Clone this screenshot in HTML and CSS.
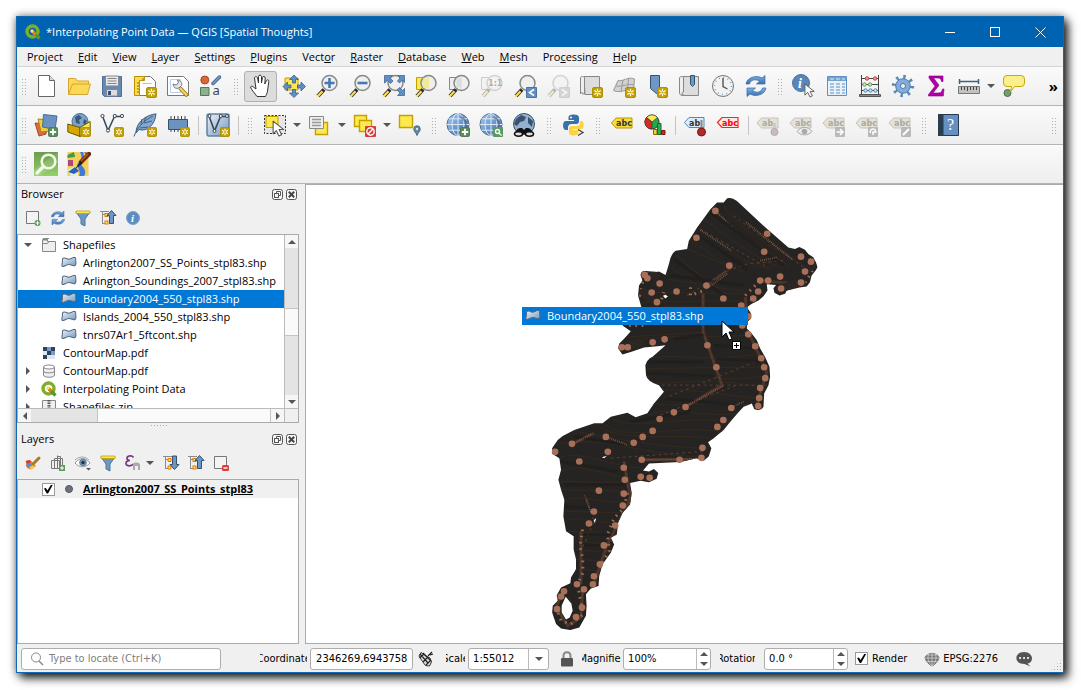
FILE: index.html
```html
<!DOCTYPE html>
<html lang="en">
<head>
<meta charset="utf-8">
<meta name="viewport" content="width=device-width, initial-scale=1">
<title>*Interpolating Point Data — QGIS [Spatial Thoughts]</title>
<link rel="stylesheet" href="styles.css">
</head>
<body>
<svg class="sprite" aria-hidden="true">
  <defs>
    <linearGradient id="g-blue" x1="0" y1="0" x2="1" y2="1"><stop offset="0" stop-color="#eef3f8"/><stop offset="1" stop-color="#6f97bf"/></linearGradient>
    <linearGradient id="g-globe" x1="0" y1="0" x2="1" y2="1"><stop offset="0" stop-color="#a9cdf3"/><stop offset="1" stop-color="#3669a8"/></linearGradient>
    <linearGradient id="g-green" x1="0" y1="0" x2="0" y2="1"><stop offset="0" stop-color="#6c9c4c"/><stop offset="1" stop-color="#93d169"/></linearGradient>
    <linearGradient id="g-sync" x1="0" y1="0" x2="0" y2="1"><stop offset="0" stop-color="#7fb0e6"/><stop offset="1" stop-color="#3a6fae"/></linearGradient>
  </defs>
  <symbol id="star" viewBox="0 0 11 11"><rect x=".5" y=".5" width="10" height="10" rx="1.5" fill="#c4a000" stroke="#b08f00"/><path d="M5.500 1.800v7.400M2.300 3.600l6.400 3.800M8.700 3.600l-6.400 3.800" stroke="#fff" stroke-width="1.200"/><circle cx="5.500" cy="5.500" r="1.100" fill="#c4a000"/></symbol>
  <symbol id="add" viewBox="0 0 11 11"><rect x=".5" y=".5" width="10" height="10" rx="1.500" fill="#5a8c5a" stroke="#4a774c"/><path d="M5.500 2v7M2 5.500h7" stroke="#fff" stroke-width="2"/></symbol>
  <symbol id="lens" viewBox="0 0 24 24"><path d="M9 15.500 3 22" stroke="#2b2b2b" stroke-width="4"/><path d="M7.500 17.200 2.500 22.500" stroke="#fcd94f" stroke-width="2.400"/><circle cx="14.500" cy="9" r="7.500" fill="#eee" fill-opacity=".88" stroke="#888a85" stroke-width="1.500"/></symbol>
  <symbol id="pointer" viewBox="0 0 14 16"><path d="M1 1v12l3-3 2.500 5 2.500-1.200L6.600 9H11z" fill="#fff" stroke="#555" stroke-width="1" stroke-linejoin="round"/></symbol>
  <symbol id="globe" viewBox="0 0 24 24"><circle cx="12" cy="11.500" r="11" fill="url(#g-globe)" stroke="#54708f"/><path d="M12 .5v22M1 11.500h22M2.800 5.800h18.400M2.800 17.200h18.400" stroke="#dce9f7" fill="none"/><ellipse cx="12" cy="11.500" rx="6" ry="11" fill="none" stroke="#dce9f7"/><path d="M15 4a9 9 0 0 1 4 12" fill="none" stroke="#4a5d74" stroke-width="2" opacity=".6"/></symbol>
  <symbol id="graytag" viewBox="0 0 24 24"><path d="M1 7 5.500 2h16.500v10H5.500z" fill="#e5e2d8" stroke="#c5c3bb"/></symbol>
  <symbol id="refresh" viewBox="0 0 24 24"><path d="M2 10C3 3.500 12 .5 18 4l3-2.500V10h-8.500l3-2.800C11 4.500 6.500 6 5.500 10z" fill="url(#g-sync)" stroke="#3568a5" stroke-width=".7"/><path d="M22 14c-1 6.500-10 9.500-16 6l-3 2.500V14h8.500l-3 2.800c4.500 2.700 9 1.200 10-2.800z" fill="url(#g-sync)" stroke="#3568a5" stroke-width=".7"/></symbol>
  <symbol id="polygon" viewBox="0 0 17 14"><path d="M1.500 3C2.500 1 5 1.800 7 2.800s4-1.300 7-1.800c2.500 0 1.200 3 1.800 5 .6 3-1 4.500-3 3.800S9 8 6.500 9 1 12 1 9.500 2 6 1.500 3z" fill="url(#g-blue)" stroke="#56687d" stroke-width="1.100"/></symbol>
  <symbol id="qgis" viewBox="0 0 16 16"><circle cx="7.500" cy="7.500" r="5.500" fill="none" stroke="#7fae2c" stroke-width="3.400"/><path d="m8 8 6.500 6.500" stroke="#589632" stroke-width="3.200"/><path d="m7 7 3.500 3.500" stroke="#ee7913" stroke-width="3"/><circle cx="7" cy="7" r="1.700" fill="#f4e05a"/></symbol>
  <symbol id="tree-up" viewBox="0 0 18 18"><path d="M3.500 2v13M3.500 5.500h5M3.500 14.500h5M1 2.500h9" stroke="#8b8b8b" fill="none"/><rect x="6" y="4.500" width="3" height="3" fill="#fce94f" stroke="#e3770c"/><rect x="6" y="12" width="3" height="3" fill="#fce94f" stroke="#e3770c"/><path d="M12.500 1.500 17 6.500h-2.500v8h-4v-8H8z" fill="#6d97c4" stroke="#34516e"/></symbol>
  <symbol id="funnel" viewBox="0 0 18 18"><path d="M2 3h14l-5 7v7l-4-2v-5z" fill="#6d97c4" stroke="#4f759c"/><path d="M2 2h14v2.500H2z" fill="#fce94f" stroke="#c4a000" stroke-width=".8"/></symbol>
  <symbol id="float" viewBox="0 0 11 11"><rect x=".5" y=".5" width="10" height="10" rx="2" fill="#f6f6f6" stroke="#555"/><path d="M4.500 4.500v-2h4v4h-2" fill="none" stroke="#555"/><rect x="2.500" y="4.500" width="4" height="4" fill="none" stroke="#555"/></symbol>
  <symbol id="close" viewBox="0 0 11 11"><rect x=".5" y=".5" width="10" height="10" rx="2" fill="#f6f6f6" stroke="#555"/><path d="m2.800 2.800 5.400 5.400m0-5.400L2.800 8.200" stroke="#444" stroke-width="2"/></symbol>
</svg>

<main class="window">
  <header class="titlebar">
    <svg class="logo" viewBox="0 0 16 16"><use href="#qgis"/></svg>
    <h1 class="title">*Interpolating Point Data — QGIS [Spatial Thoughts]</h1>
    <button class="winbtn" aria-label="Minimize"><svg viewBox="0 0 11 11"><path d="M0 5.500h10" stroke="#fff"/></svg></button>
    <button class="winbtn" aria-label="Maximize"><svg viewBox="0 0 11 11"><rect x=".5" y=".5" width="9" height="9" fill="none" stroke="#fff"/></svg></button>
    <button class="winbtn" aria-label="Close"><svg viewBox="0 0 11 11"><path d="m.5.5 10 10m0-10-10 10" stroke="#fff"/></svg></button>
  </header>

  <nav class="menubar" aria-label="Main menu">
    <button>Pro<u>j</u>ect</button><button><u>E</u>dit</button><button><u>V</u>iew</button><button><u>L</u>ayer</button><button><u>S</u>ettings</button><button><u>P</u>lugins</button><button>Vect<u>o</u>r</button><button><u>R</u>aster</button><button><u>D</u>atabase</button><button><u>W</u>eb</button><button><u>M</u>esh</button><button>Pro<u>c</u>essing</button><button><u>H</u>elp</button>
  </nav>

  <div class="toolbar">
    <i class="handle first"></i>
    <button class="tool" aria-label="New project"><svg viewBox="0 0 24 24"><path d="M4.500 1.500h11l5 5v16h-16z" fill="#fff" stroke="#666"/><path d="M15.500 1.500v5h5" fill="#ddd" stroke="#666"/></svg></button>
    <button class="tool" aria-label="Open project"><svg viewBox="0 0 24 24"><path d="M1.500 20.500v-16h7l2 2.500h11v4" fill="#fcd94f" stroke="#d5a632"/><path d="m1.500 20.500 4-10.500H23.500l-3 10.500z" fill="#fcd858" stroke="#d5a632"/></svg></button>
    <button class="tool" aria-label="Save project"><svg viewBox="0 0 24 24"><path d="M2.500 2.500h19v20h-17l-2-2z" fill="#6389b5" stroke="#4f6f93"/><path d="M5.500 2h13v10h-13z" fill="#e8e8e8" stroke="#888"/><path d="M7.500 4.500h9m-9 2.500h9m-9 2.500h9" stroke="#888"/><path d="M6.500 15.500h11v6.500h-11z" fill="#ddd" stroke="#888"/><path d="M8 17h3v4H8z" fill="#33526f"/></svg></button>
    <button class="tool" aria-label="New print layout"><svg viewBox="0 0 24 24"><path d="M2.500 2.500h15l5 5v14h-20z" fill="#fff" stroke="#777"/><path d="M1.500 2.500h10v4h-5v15h-5z" fill="#fcd94f" stroke="#b99200"/><path d="M4 9h2M4 12h2M4 15h2M4 18h2M10 4v2" stroke="#8a6b00"/><path d="M9.500 9.500h9" stroke="#aac5e3"/><use href="#star" x="13" y="13" width="11" height="11"/></svg></button>
    <button class="tool" aria-label="Layout manager"><svg viewBox="0 0 24 24"><path d="M1.500 2.500h16l5 5v14h-21z" fill="#fff" stroke="#777"/><path d="M4.500 5.500h10v13h-10z" fill="none" stroke="#b8cdf0"/><path d="m14 14 7.500 8" stroke="#8e6c00" stroke-width="4"/><path d="m14 14 7 7.500" stroke="#f4d36a" stroke-width="2.400"/><path d="m11.500 6 1 3-2.500 2-3-1c.5 4 3 5 6 4l2.500-2.500c1-3-1-5-4-5.500z" fill="#e4e4e4" stroke="#777"/></svg></button>
    <button class="tool" aria-label="Style manager"><svg viewBox="0 0 24 24"><circle cx="5.800" cy="6" r="4" fill="#d9673a" stroke="#a94c26"/><path d="M14 9.500 20.500 3" stroke="#3f638c" stroke-width="3.500" stroke-linecap="round"/><path d="m14 9.500 6.500-6.500" stroke="#6d97c4" stroke-width="1.800" stroke-linecap="round"/><path d="M1.500 13.500h8.500v8H1.500z" fill="#8db18e" stroke="#4e7b50"/><text x="13.500" y="21" class="glyph-a" fill="#444">a</text></svg></button>
    <i class="handle wide"></i>
    <button class="tool active" aria-label="Pan map"><svg viewBox="0 0 24 24"><path d="M8 22.500c-2-3-5.500-6.500-6.500-9.500 1-1.500 2.500-.5 3.500.5l2 1.500L5.500 4c0-1.800 2.500-2 3 0L9.500 9V2.500c0-1.800 2.700-1.800 3 0V9l1-5.500c.5-1.700 2.700-1.300 2.700.5L15.800 10l1.700-3.500c.8-1.300 2.700-.5 2.300 1L18.500 17c-.3 2.500-1.500 4-2 5.500z" fill="#fff" stroke="#333"/></svg></button>
    <button class="tool" aria-label="Pan to selection"><svg viewBox="0 0 24 24"><path d="M3 4h13v12H3z" fill="#fce94f" stroke="#c4a000"/><g fill="#5f8fc4" stroke="#3b5e86" stroke-width=".8"><path d="m12 1 4.500 4.500h-3V9h-3V5.500h-3z"/><path d="M12 23.500 7.500 19h3v-3.500h3V19h3z"/><path d="M1 12.500 5.500 8v3H9v3H5.500v3z"/><path d="M23.500 12.500 19 8v3h-3.500v3H19v3z"/></g></svg></button>
    <button class="tool" aria-label="Zoom in"><svg viewBox="0 0 24 24"><use href="#lens"/><path d="M14.500 4v10m-5-5h10" stroke="#4679b4" stroke-width="2.600"/></svg></button>
    <button class="tool" aria-label="Zoom out"><svg viewBox="0 0 24 24"><use href="#lens"/><path d="M9.500 9h10" stroke="#4679b4" stroke-width="2.600"/></svg></button>
    <button class="tool" aria-label="Zoom full"><svg viewBox="0 0 24 24"><use href="#lens"/><g fill="#5f8fc4" stroke="#45678f" stroke-width=".8"><path d="M3.500 1.500h8l-2.500 2.500 3 3-2.500 2.500-3-3-3 2.500z"/><path d="M23.500 1.500h-7l2.500 2.500-2.500 3 2 2 3-3 2 2.500z"/><path d="M23.500 21.500h-7l2.500-2.500-3-3 2.500-2.500 3 3 2-2z"/></g></svg></button>
    <button class="tool" aria-label="Zoom to selection"><svg viewBox="0 0 24 24"><path d="M2.500 3.500h12v12h-12z" fill="#fce94f" stroke="#c4a000"/><use href="#lens"/><path d="M9 4h6v10H9z" fill="#f3e985" opacity=".8"/></svg></button>
    <button class="tool" aria-label="Zoom to layer"><svg viewBox="0 0 24 24"><path d="M2.500 3.500h12v12h-12z" fill="#eee" stroke="#888"/><use href="#lens"/><path d="M9.500 4.500h5v9h-5z" fill="#ddd"/></svg></button>
    <button class="tool faded" aria-label="Zoom to native resolution"><svg viewBox="0 0 24 24"><path d="M1.500 3.500h10v12h-10z" fill="#eee" stroke="#777"/><use href="#lens"/><text x="8" y="12" class="ratio" fill="#222">1:1</text></svg></button>
    <button class="tool" aria-label="Zoom last"><svg viewBox="0 0 24 24"><use href="#lens"/><path d="M13.500 13.500h10v10h-10z" fill="#5f8fc4" stroke="#4a73a2"/><path d="m21 15.500-4.500 3 4.500 3" fill="none" stroke="#fff" stroke-width="1.600"/></svg></button>
    <button class="tool faded" aria-label="Zoom next"><svg viewBox="0 0 24 24"><use href="#lens"/><path d="M13.500 13.500h10v10h-10z" fill="#999" stroke="#888"/><path d="m16 15.500 4.500 3-4.500 3" fill="none" stroke="#fff" stroke-width="1.600"/></svg></button>
    <button class="tool" aria-label="New map view"><svg viewBox="0 0 24 24"><path d="M5 2.500h15.500v18H6z" fill="#ddd" stroke="#888"/><path d="M1.500 4c0-2 4-2 4 0v16h-2c1-2-2-2-2 0z" fill="#eee" stroke="#888"/><use href="#star" x="13" y="13" width="11" height="11"/></svg></button>
    <button class="tool" aria-label="New 3D map view"><svg viewBox="0 0 24 24"><path d="M6 6.500C11 8 16 2 22.500 5l-1 11c-6-2-13 4-20 .5z" fill="#d2d2d2" stroke="#999"/><path d="M4 12c7 1 12-3 18-1M11 6 9 18M16.500 4.500l-1 12" fill="none" stroke="#999"/><use href="#star" x="13" y="13" width="11" height="11"/></svg></button>
    <button class="tool" aria-label="New spatial bookmark"><svg viewBox="0 0 24 24"><path d="M5.500 1.500h9v18h-3l-6-5z" fill="#6d97c4" stroke="#34516e"/><use href="#star" x="12" y="13" width="11" height="11"/></svg></button>
    <button class="tool" aria-label="Show bookmarks"><svg viewBox="0 0 24 24"><path d="M5 2.500h15.500v19H3.500z" fill="#ddd" stroke="#888"/><path d="M1.500 4c0-2 4-2 4 0v14c-2 0-2 3 0 3h-2c-2 0-2-2-2-2z" fill="#eee" stroke="#888"/><path d="M12.500 1.500h4v9l-2 2-2-2z" fill="#6d97c4" stroke="#34516e"/></svg></button>
    <button class="tool" aria-label="Temporal controller"><svg viewBox="0 0 24 24"><circle cx="12" cy="12" r="10.500" fill="#f2f2f2" stroke="#777"/><circle cx="12" cy="12" r="8.500" fill="none" stroke="#70a0cf" stroke-width="1.500" stroke-dasharray="1 3.450"/><path d="M12 4v8.500l4.500 2.500" fill="none" stroke="#555" stroke-width="1.400"/></svg></button>
    <button class="tool" aria-label="Refresh"><svg viewBox="0 0 24 24"><use href="#refresh"/></svg></button>
    <i class="handle"></i>
    <button class="tool" aria-label="Identify features"><svg viewBox="0 0 24 24"><circle cx="9" cy="9" r="8.500" fill="#5886b8" stroke="#4a73a2"/><text x="6" y="14" class="info" fill="#fff">i</text><use href="#pointer" x="12" y="9" width="13" height="15"/></svg></button>
    <button class="tool" aria-label="Open attribute table"><svg viewBox="0 0 24 24"><path d="M2.500 2.500h19v19h-19z" fill="#eaf1f8" stroke="#5f8fc4"/><path d="M3 3h18v4H3z" fill="#75a3d0"/><path d="M5 5h4m2 0h4m2 0h3" stroke="#d9e8f6"/><path d="M5 10h4m2 0h4m2 0h3M5 13h4m2 0h4m2 0h3M5 16h4m2 0h4m2 0h3M5 19h4m2 0h4m2 0h3" stroke="#5f8fc4"/></svg></button>
    <button class="tool" aria-label="Field calculator"><svg viewBox="0 0 24 24"><path d="M3.500 1v20M20.500 1v20M3.500 4.500h17M3.500 10.500h17M3.500 16.500h17" stroke="#444" fill="none"/><path d="M1.500 20.500h21v2h-21z" fill="#888" stroke="#555"/><g fill="#f6a5a0" stroke="#c33"><circle cx="9" cy="4.500" r="1.700"/><circle cx="17" cy="4.500" r="1.700"/></g><g fill="#c5eec0" stroke="#5a9b55"><circle cx="6.500" cy="10.500" r="1.700"/><circle cx="12" cy="10.500" r="1.700"/></g><g fill="#c5e3f5" stroke="#4c86b5"><circle cx="7.500" cy="16.500" r="1.700"/><circle cx="12.500" cy="16.500" r="1.700"/><circle cx="17.500" cy="16.500" r="1.700"/></g></svg></button>
    <button class="tool" aria-label="Toolbox"><svg viewBox="0 0 24 24"><circle cx="12" cy="12" r="9.200" fill="none" stroke="#5c88bb" stroke-width="4" stroke-dasharray="2.400 4.824"/><circle cx="12" cy="12" r="7.300" fill="#82acdb" stroke="#4e79ab"/><circle cx="12" cy="12" r="2.500" fill="#eee" stroke="#4e79ab"/></svg></button>
    <button class="tool" aria-label="Statistical summary"><svg viewBox="0 0 24 24"><path d="M5 2h14v5.500h-1.500C17 4.500 16 4 14 4H9.500l5.500 7.200L9 19h5.500c2.500 0 3.500-1.500 4-4H20L19.300 22H4.500v-1.500L11 12.200 5 4z" fill="#b100a8" stroke="#830080" stroke-width=".6"/></svg></button>
    <button class="tool" aria-label="Measure line"><svg viewBox="0 0 24 24"><path d="M2.500 5v5M21.500 5v5M3 7.500h18" stroke="#42617f" stroke-width="1.500"/><path d="M1.500 12.500h21v7h-21z" fill="#c2c2c2" stroke="#777"/><path d="M4.500 13v3m3-3v3m3-3v4m3-4v3m3-3v3m3-3v3" stroke="#444"/></svg></button>
    <button class="drop" aria-label="Measure options"></button>
    <button class="tool" aria-label="Map tips"><svg viewBox="0 0 24 24"><circle cx="5.500" cy="19" r="3.500" fill="#6f9e70" stroke="#4c6d4e"/><path d="M5 1.500h14q3.500 0 3.500 3.500v4q0 3.500-3.500 3.500h-6.500L8.500 18l1-5.500H5Q1.500 12.500 1.500 9V5q0-3.500 3.500-3.500z" fill="#fcee8b" stroke="#cba90a"/></svg></button>
    <button class="more" aria-label="More tools">»</button>
  </div>

  <div class="toolbar">
    <i class="handle first"></i>
    <button class="tool" aria-label="Data source manager"><svg viewBox="0 0 24 24"><path d="m1 10 12 1-1 10-7 2z" fill="#dc6b3d" stroke="#9d4824"/><path d="m4 6 13 1-1 11-9 1z" fill="#f2cc35" stroke="#a58412"/><path d="M9.500 1.500 23 3l-2 13.500-12.500-2.500z" fill="#6a93c1" stroke="#4a6c93"/><use href="#add" x="14" y="14" width="10" height="10"/></svg></button>
    <button class="tool" aria-label="New GeoPackage layer"><svg viewBox="0 0 24 24"><circle cx="13" cy="8.500" r="8" fill="#7da2c8" stroke="#4c6d8e"/><path d="m8 4 4-2 3 3-3 2 1 4-4-1zm9 2 3 2-2 4-2-2z" fill="#38597b"/><path d="M.8 11 13 14.500v9L.8 19z" fill="#d4a800" stroke="#6b5500"/><path d="m13 14.500 10.200-6v10L13 23.500z" fill="#fce94f" stroke="#6b5500"/><use href="#star" x="14" y="14" width="10" height="10"/></svg></button>
    <button class="tool" aria-label="New shapefile layer"><svg viewBox="0 0 24 24"><path d="m2.500 3 5.500 14.500L14.500 3.500h7" fill="none" stroke="#35475b" stroke-width="1.500"/><g fill="#fff" stroke="#35475b"><circle cx="2.500" cy="3" r="1.600"/><circle cx="8" cy="17.500" r="1.600"/><circle cx="14.800" cy="3" r="1.600"/><circle cx="22" cy="3" r="1.600"/></g><use href="#star" x="14" y="14" width="10" height="10"/></svg></button>
    <button class="tool" aria-label="New SpatiaLite layer"><svg viewBox="0 0 24 24"><path d="M3 20C3 9 13 2 23 .8 22 12 14 19 6 16.500z" fill="#83a9d1" stroke="#3f5f80"/><path d="M1 23.500C4 15 10 8 20 3M8 11l1-5m2 2.500 2-4.500M7 15l8-1m-4-4 8-2" fill="none" stroke="#3f5f80"/><use href="#star" x="14" y="14" width="10" height="10"/></svg></button>
    <button class="tool" aria-label="New temporary scratch layer"><svg viewBox="0 0 24 24"><path d="M5 3v16M8.500 3v16M12 3v16M15.500 3v16M19 3v16" stroke="#444"/><path d="M2.500 6.500h19v10h-19z" fill="#6a93c1" stroke="#34516e"/><use href="#star" x="14" y="14" width="10" height="10"/></svg></button>
    <i class="sep"></i>
    <button class="tool" aria-label="New virtual layer"><svg viewBox="0 0 24 24"><rect x="1" y="1" width="22" height="22" rx="2" fill="url(#g-blue)" stroke="#6280a0" stroke-width="1.500"/><path d="m3 3 5.500 15L14.500 3.500H21" fill="none" stroke="#35475b" stroke-width="1.600"/><g fill="#fff" stroke="#35475b"><circle cx="3.500" cy="3" r="1.500"/><circle cx="8.500" cy="18" r="1.500"/><circle cx="14.800" cy="3" r="1.500"/><circle cx="21" cy="3" r="1.500"/></g><use href="#star" x="14" y="14" width="10" height="10"/></svg></button>
    <i class="sep"></i>
    <i class="handle wide"></i>
    <button class="tool" aria-label="Select features"><svg viewBox="0 0 24 24"><path d="M1.500 2.500h21v18h-21z" fill="#e6e6e6" stroke="#333" stroke-dasharray="2 1.500"/><path d="M3 3.500h12v11H3z" fill="#fce94f" stroke="#c4a000"/><use href="#pointer" x="9" y="7" width="15" height="17"/></svg></button>
    <button class="drop" aria-label="Selection options"></button>
    <button class="tool" aria-label="Select by value"><svg viewBox="0 0 24 24"><path d="M7.500 9.500h12v12h-12z" fill="#fce94f" stroke="#c4a000" stroke-width="1.400"/><path d="M1.500 3.500h14v12h-14z" fill="#eee" stroke="#888"/><path d="M4 6.500h9m-9 3h9m-9 3h9" stroke="#999" stroke-width="1.400"/></svg></button>
    <button class="drop" aria-label="Select by options"></button>
    <button class="tool" aria-label="Deselect features"><svg viewBox="0 0 24 24"><path d="M1.500 2.500h12v11h-12z" fill="#fce94f" stroke="#c4a000" stroke-width="1.400"/><path d="M6.500 7.500h12v11h-12z" fill="#fce94f" stroke="#c4a000" stroke-width="1.400"/><rect x="12" y="13" width="11" height="11" rx="1" fill="#d93a3a"/><circle cx="17.500" cy="18.500" r="3.700" fill="none" stroke="#fff" stroke-width="1.400"/><path d="m20 16-5 5" stroke="#fff" stroke-width="1.400"/></svg></button>
    <button class="drop" aria-label="Deselect options"></button>
    <button class="tool" aria-label="Select by location"><svg viewBox="0 0 24 24"><path d="M1.500 2.500h13v12h-13z" fill="#fce94f" stroke="#c4a000" stroke-width="1.400"/><path d="M19 22.500c-1-3-3.200-4-3.200-6.500a3.200 3.200 0 0 1 6.400 0c0 2.500-2.200 3.500-3.200 6.500z" fill="#658ba5" stroke="#49697f"/><circle cx="19" cy="16" r="1" fill="#fff"/></svg></button>
    <i class="handle"></i>
    <button class="tool" aria-label="Add web layer"><svg viewBox="0 0 24 24"><use href="#globe"/><use href="#add" x="14" y="14" width="10" height="10"/></svg></button>
    <button class="tool" aria-label="Search web layer"><svg viewBox="0 0 24 24"><use href="#globe"/><rect x="14" y="14" width="10" height="10" rx="1" fill="#5a9a62"/><circle cx="18.500" cy="18.500" r="2" fill="none" stroke="#fff" stroke-width="1.300"/><path d="m20 20 2.500 2.500" stroke="#fff" stroke-width="1.300"/></svg></button>
    <button class="tool" aria-label="MetaSearch"><svg viewBox="0 0 24 24"><circle cx="12" cy="11" r="10.500" fill="#93b1cd" stroke="#34516e"/><path d="m4 6 5-4 5 2-2 4-4 1-3 4-3-2zm12-2 5 4-1 6-4-4z" fill="#38536f"/><path d="M3 21c0-3 3-6 5-6h2l2 2 2-2h2c2 0 5 3 5 6z" fill="#111"/><g fill="#ddd" stroke="#111" stroke-width="1.600"><ellipse cx="6.500" cy="21" rx="4" ry="2.200"/><ellipse cx="17.500" cy="21" rx="4" ry="2.200"/></g></svg></button>
    <i class="handle wide"></i>
    <button class="tool" aria-label="Python console"><svg viewBox="0 0 24 24"><path d="M12 1.500c-4 0-5.500 1.200-5.500 3V7H12v1H4c-2 0-3 2-3 4.500S2 17 4 17h2v-2.500C6 12.500 7.500 11 9.500 11h5c1.500 0 2.500-1 2.500-2.500v-4c0-2-2-3-5-3z" fill="#3873a8"/><path d="M11 22.500c4 0 5.500-1 5.500-3V17H11v-1h8c2 0 2.700-1.500 2.700-4S21 8 19.500 8H18v2c0 1.800-1.500 3-3.500 3h-5C8 13 7 14 7 15.500v4c0 2 1.500 3 4 3z" fill="#fbd343"/><circle cx="9" cy="4.500" r="1" fill="#fff"/><path d="m16 16.500 5 3-5 3" fill="none" stroke="#444" stroke-width="1.300"/></svg></button>
    <i class="handle"></i>
    <button class="tool" aria-label="Layer labeling"><svg viewBox="0 0 24 24"><path d="M1.500 10 6 5h16v10H6z" fill="#f8df38" stroke="#b29610"/><text x="6" y="13" class="abc" fill="#333">abc</text></svg></button>
    <button class="tool" aria-label="Layer diagram"><svg viewBox="0 0 24 24"><circle cx="9" cy="9" r="7" fill="#1faa4c" stroke="#333"/><path d="M9 9 3.500 4.500A7 7 0 0 1 14.500 4.500z" fill="#fce94f" stroke="#333" stroke-width=".6"/><path d="M9 9V16A7 7 0 0 1 3.500 4.500z" fill="#d62c20" stroke="#333" stroke-width=".6"/><path d="M10.500 16.500h3.500v5h-3.500z" fill="#fccb30" stroke="#8d6b00"/><path d="M14.500 10.500h3.500v11h-3.500z" fill="#2cae50" stroke="#186b2e"/><path d="M18.500 17.500h3.500v4h-3.500z" fill="#cc2a1d" stroke="#7e1710"/></svg></button>
    <i class="sep"></i>
    <button class="tool" aria-label="Pin labels"><svg viewBox="0 0 24 24"><path d="M1.500 9.500 6 4.500h15v10H6z" fill="#dcecfa" stroke="#4f87c2"/><text x="6" y="13" class="abc" fill="#333">ab</text><path d="M18.500 7v9" stroke="#888" stroke-width="2"/><circle cx="18.500" cy="19" r="4" fill="#b5262a" stroke="#761717"/></svg></button>
    <button class="tool" aria-label="Toggle unplaced labels"><svg viewBox="0 0 24 24"><path d="M1.500 9.500 6 4.500h16v10H6z" fill="#fde6e6" stroke="#f22" stroke-width="1.200"/><text x="6" y="13" class="abc" fill="#f00">abc</text></svg></button>
    <i class="sep"></i>
    <button class="tool" aria-label="Highlight pinned labels"><svg viewBox="0 0 24 24"><use href="#graytag" y="3"/><text x="6" y="13" class="abc" fill="#aaa9a3">ab</text><path d="M18.500 10v6" stroke="#ccc" stroke-width="3"/><circle cx="18.500" cy="19" r="3.500" fill="#c6bdbd" stroke="#b5aaaa"/></svg></button>
    <button class="tool" aria-label="Show or hide labels"><svg viewBox="0 0 24 24"><use href="#graytag" y="3"/><text x="6" y="13" class="abc" fill="#aaa9a3">abc</text><path d="M8 18.500c4-5.500 11-5.500 15 0-4 4.500-11 4.500-15 0z" fill="#eee" stroke="#aaa"/><circle cx="15.500" cy="18.500" r="2.800" fill="#aaa"/></svg></button>
    <button class="tool" aria-label="Move label"><svg viewBox="0 0 24 24"><use href="#graytag" y="3"/><text x="6" y="13" class="abc" fill="#aaa9a3">abc</text><rect x="13" y="14" width="10" height="10" rx="1" fill="#b9b9b9"/><path d="M14.500 19h6m-2.500-3 3 3-3 3" fill="none" stroke="#fff" stroke-width="1.600"/></svg></button>
    <button class="tool" aria-label="Rotate label"><svg viewBox="0 0 24 24"><use href="#graytag" y="3"/><text x="6" y="13" class="abc" fill="#aaa9a3">abc</text><rect x="13" y="14" width="10" height="10" rx="1" fill="#b9b9b9"/><path d="M15.500 20a2.800 2.800 0 1 1 5 0m-2.500 2v-3h3" fill="none" stroke="#fff" stroke-width="1.500"/></svg></button>
    <button class="tool" aria-label="Change label properties"><svg viewBox="0 0 24 24"><use href="#graytag" y="3"/><text x="6" y="13" class="abc" fill="#aaa9a3">abc</text><rect x="13" y="14" width="10" height="10" rx="1" fill="#b9b9b9"/><path d="m15 22 6-6" stroke="#fff" stroke-width="2"/></svg></button>
    <i class="handle"></i>
    <button class="tool" aria-label="Help contents"><svg viewBox="0 0 24 24"><path d="M2.500 1.500h20v21h-20z" fill="#6590c2" stroke="#26384a"/><path d="M2 1h5.500v22H2z" fill="#2a3e50"/><text x="11" y="17" class="question" fill="#fff">?</text></svg></button>
    <i class="handle last"></i>
  </div>

  <div class="toolbar">
    <i class="handle first"></i>
    <button class="tool" aria-label="QuickMapServices search"><svg viewBox="0 0 24 24"><path d="M0 0h24v24H0z" fill="url(#g-green)"/><path d="M24 0v10L6 24H0V18z" fill="#fff" opacity=".12"/><circle cx="14.500" cy="9.500" r="6.800" fill="none" stroke="#f3f7ef" stroke-width="2.600"/><path d="m9.500 14.500-6.500 6.500" stroke="#f3f7ef" stroke-width="3.200" stroke-linecap="round"/></svg></button>
    <button class="tool" aria-label="OpenStreetMap editor"><svg viewBox="0 0 24 24"><path d="M.5 0h21v24H.5z" fill="#f7cf5b"/><path d="M.5 3 7 0l1 5-7.500 1z" fill="#3f9b4a"/><path d="M1 8h5v6H1z" fill="#b04878"/><path d="M13 0c3 6 1 8-2 11s4 8 1 13h5c3-4 0-8-2-10s4-8 1-14z" fill="#3f7ad8"/><path d="m.5 18 8-4 3 10H4z" fill="#e8f0d8"/><path d="m8 15 4 4-5 3-6-2zM17 0l4 1v4z" fill="#2861c4"/><path d="M14 10 22 2" stroke="#6d2a0b" stroke-width="4.500" stroke-linecap="round"/><path d="m14 9 7-7" stroke="#b75a24" stroke-width="1.500"/><path d="m8 17 5.500-7.500 2 2z" fill="#222"/></svg></button>
  </div>

  <div class="workspace">
    <aside class="docks">
      <section class="dock browser" aria-label="Browser">
        <div class="dockhead"><h2>Browser</h2><button aria-label="Float Browser"><svg viewBox="0 0 11 11"><use href="#float"/></svg></button><button aria-label="Close Browser"><svg viewBox="0 0 11 11"><use href="#close"/></svg></button></div>
        <div class="dockbar">
          <button aria-label="Add selected layers"><svg viewBox="0 0 18 18"><path d="M2.500 2.500h12v12h-12z" fill="#f4f4f4" stroke="#777"/><circle cx="13.500" cy="14" r="3" fill="#5a9a5a"/><path d="M13.500 12v4m-2-2h4" stroke="#fff"/></svg></button>
          <button aria-label="Refresh browser"><svg viewBox="0 0 24 24"><use href="#refresh"/></svg></button>
          <button aria-label="Filter browser"><svg viewBox="0 0 18 18"><use href="#funnel"/></svg></button>
          <button aria-label="Collapse all"><svg viewBox="0 0 18 18"><use href="#tree-up"/></svg></button>
          <button aria-label="Properties widget"><svg viewBox="0 0 18 18"><circle cx="9" cy="9" r="6.500" fill="#5b8cc2" stroke="#7da4cd"/><text x="7" y="13" class="info small" fill="#fff">i</text></svg></button>
        </div>
        <div class="treebox">
          <ul class="tree">
            <li><span class="twist open"></span><svg class="ic" viewBox="0 0 16 16"><path d="M1.500 14.500v-12h5v2h8v10z" fill="#eee" stroke="#888"/><path d="M1.500 6.500h5l1.500-2M2 1.500h6M2 3h5" fill="none" stroke="#888"/></svg>Shapefiles</li>
            <li class="child"><svg class="ic" viewBox="0 0 17 14"><use href="#polygon"/></svg>Arlington2007_SS_Points_stpl83.shp</li>
            <li class="child"><svg class="ic" viewBox="0 0 17 14"><use href="#polygon"/></svg>Arlington_Soundings_2007_stpl83.shp</li>
            <li class="child selected"><svg class="ic" viewBox="0 0 17 14"><use href="#polygon"/></svg>Boundary2004_550_stpl83.shp</li>
            <li class="child"><svg class="ic" viewBox="0 0 17 14"><use href="#polygon"/></svg>Islands_2004_550_stpl83.shp</li>
            <li class="child"><svg class="ic" viewBox="0 0 17 14"><use href="#polygon"/></svg>tnrs07Ar1_5ftcont.shp</li>
            <li><span class="twist none"></span><svg class="ic" viewBox="0 0 16 16"><path d="M2 2h12v12H2z" fill="#dbe6f2"/><path d="M2 2h4v4H2zm8 0h4v4h-4zM6 6h4v4H6zM2 10h4v4H2z" fill="#2f435c"/><path d="M6 2h4v4H6zm4 4h4v4h-4z" fill="#7a9cc4"/></svg>ContourMap.pdf</li>
            <li><span class="twist"></span><svg class="ic" viewBox="0 0 16 16"><path d="M2.500 4v8c0 3 11 3 11 0V4" fill="#f0f0f0" stroke="#888"/><ellipse cx="8" cy="4" rx="5.500" ry="2" fill="#fff" stroke="#888"/><path d="M2.500 8c0 2.500 11 2.500 11 0" fill="none" stroke="#888"/></svg>ContourMap.pdf</li>
            <li><span class="twist"></span><svg class="ic" viewBox="0 0 16 16"><use href="#qgis"/></svg>Interpolating Point Data</li>
            <li><span class="twist"></span><svg class="ic" viewBox="0 0 16 16"><path d="M1.500 1.500h13v13h-13z" fill="#eee" stroke="#888"/><path d="M8 1v9" stroke="#555" stroke-width="3" stroke-dasharray="1.500 1"/><path d="M6.500 9.500h3v4h-3z" fill="#ccc" stroke="#555"/></svg>Shapefiles.zip</li>
          </ul>
          <div class="vscroll"><button class="arrow up" aria-label="Scroll up"></button><div class="groove"><div class="thumb"></div></div><button class="arrow down" aria-label="Scroll down"></button></div>
          <div class="hscroll"><button class="arrow left" aria-label="Scroll left"></button><div class="groove"><div class="thumb"></div></div><button class="arrow right" aria-label="Scroll right"></button></div>
          <div class="corner"></div>
        </div>
      </section>
      <div class="hsplit"></div>
      <section class="dock layers" aria-label="Layers">
        <div class="dockhead"><h2>Layers</h2><button aria-label="Float Layers"><svg viewBox="0 0 11 11"><use href="#float"/></svg></button><button aria-label="Close Layers"><svg viewBox="0 0 11 11"><use href="#close"/></svg></button></div>
        <div class="dockbar">
          <button aria-label="Layer styling"><svg viewBox="0 0 18 18"><path d="m2 7 4-1 6 6-4 3c-3 1-5-1-6-3z" fill="#eb7d3c"/><path d="m1.500 7 4-1 2 2-4 2z" fill="#d8363c"/><path d="m2 11 4-2 2 2-4 3z" fill="#4f90d8"/><path d="m5 14 4-3 2 2-3 2z" fill="#f3d430"/><path d="m9 10 6-6" stroke="#aa7930" stroke-width="3" stroke-linecap="round"/></svg></button>
          <button aria-label="Add group"><svg viewBox="0 0 18 18"><path d="M2.500 6.500h8v8h-8z" fill="#eee" stroke="#777"/><path d="M5.500 4.500h8v10h-8zM8.500 1.500v13M8.500 2.500h3v12" fill="none" stroke="#777"/><path d="M10 11h6v6h-6z" fill="#5a9a5a"/><path d="M13 12v4m-2-2h4" stroke="#fff"/></svg></button>
          <button aria-label="Manage map themes"><svg viewBox="0 0 18 18"><path d="M1 9c4-6 11-6 15 0-4 5-11 5-15 0z" fill="#fff" stroke="#999"/><circle cx="9" cy="8.500" r="3.800" fill="#6489ac"/><circle cx="9" cy="8.500" r="1.500" fill="#223"/><path d="M1 6c4-4 10-4 14 0" fill="none" stroke="#aaa"/><path d="M12 14h5l-2.500 2.500z" fill="#555"/></svg></button>
          <button aria-label="Filter legend"><svg viewBox="0 0 18 18"><use href="#funnel"/></svg></button>
          <button aria-label="Filter by expression"><svg viewBox="0 0 18 18"><path d="M9.500 3.500C8 1 3 1.500 3 4.500c0 1.500 1.500 2 3 2-2 0-4 .8-4 2.800 0 3.200 5.500 3.200 7.500.7" fill="none" stroke="#793b87" stroke-width="1.700"/><path d="M9 10c1-2 7-2 7 1v5h-2v-4h-3v4H9z" fill="#aaa"/></svg></button>
          <button class="drop" aria-label="Filter options"></button>
          <button aria-label="Expand all"><svg viewBox="0 0 18 18"><path d="M3.500 2v13M3.500 5.500h5M3.500 14.500h5M1 2.500h9" stroke="#8b8b8b" fill="none"/><path d="M6 4.500h3v3H6zM6 12h3v3H6z" fill="#fce94f" stroke="#e3770c"/><path d="M12.500 15.500 17 10.500h-2.500V2h-4v8.500H8z" fill="#6d97c4" stroke="#34516e"/></svg></button>
          <button aria-label="Collapse all layers"><svg viewBox="0 0 18 18"><use href="#tree-up"/></svg></button>
          <button aria-label="Remove layer"><svg viewBox="0 0 18 18"><path d="M2.500 2.500h12v12h-12z" fill="#f4f4f4" stroke="#777"/><rect x="10" y="11" width="7" height="6" rx="1.500" fill="#e03a3a"/><path d="M11.500 14h4" stroke="#fff" stroke-width="1.400"/></svg></button>
        </div>
        <div class="layerlist">
          <label class="layer"><input type="checkbox" class="check" checked><span class="dot"></span><span class="layername">Arlington2007_SS_Points_stpl83</span></label>
        </div>
      </section>
    </aside>
    <div class="vsplit"></div>
    <section class="canvas" aria-label="Map canvas">
      <svg class="map" viewBox="305 184 758 460">
        <defs>
          <clipPath id="shore"><path clip-rule="evenodd" d="M590 38Q600 32 620 45L700 120 775 185 795 190 808 184 825 192 835 205 850 215 858 230 863 245 855 258 845 270 840 290 830 303 812 305 795 300 785 310 770 315 765 325 748 330 733 322 730 308 738 298 710 296 712 315 700 332 685 345 665 355 650 365 663 385 662 400 650 410 650 430 665 445 680 465 690 490 705 515 718 545 720 575 715 600 702 625 700 665Q690 680 672 672L665 655 640 665 622 685 600 710 580 735 550 760 533 772 543 790 535 815 520 828 498 820 450 832 355 836 337 857 355 860 370 853 383 865 378 882 355 893 330 888 298 895 303 925 298 960 275 985 262 1015 258 1050 240 1060 250 1080 240 1105 215 1140 205 1175 203 1205 180 1213 165 1230 167 1265 165 1295 145 1330 118 1338 90 1333 75 1320 63 1285 65 1265 80 1250 77 1233 90 1210 118 1197 120 1180 135 1155 135 1125 128 1095 128 1055 105 1040 97 995 100 945 90 915 82 885 90 855 85 820 63 807 63 790 80 765 95 753 130 735 190 715 215 715 240 695 290 683 315 697 350 685 370 655 400 620 385 600Q350 590 346 570L344 540Q350 520 365 515L405 480 380 483 340 487 300 500 275 508 262 490 265 475 285 455 300 438 275 420 335 375 322 330 325 300 335 285 330 265 343 255 365 262 385 258 405 268 415 235Q420 205 435 195L470 190 475 165 500 125 540 70 560 50 580 50ZM104 1238 121 1258 125 1280 116 1300 105 1306 92 1285 92 1264ZM397 331 405 328 412 333 404 339ZM188 1007 196 1000 192 1016ZM213 817 228 813 220 820Z"/></clipPath>
        </defs>
        <g transform="translate(530 185) scale(.333333)">
          <g clip-path="url(#shore)">
            <path fill="#262422" d="M0 0h900v1400H0z"/>
            <g fill="none" stroke="#35291f" stroke-width="3">
              <path d="M545 70C600 140 680 170 780 245M520 100C590 150 660 210 760 250M500 125C560 160 620 230 720 250M480 165C540 200 580 240 640 260M470 190 590 240M610 80 790 215M580 60C630 140 740 190 840 250M440 210C470 240 530 290 600 330M420 240C450 270 500 290 520 330M410 280 650 320M340 320 640 325M335 350 680 345M330 390C420 340 470 370 650 370M280 455 530 440M270 485C350 440 450 460 660 450M355 520C450 500 500 535 690 505M350 550 715 545M350 575C450 555 570 600 715 570M380 595C480 590 580 580 710 610M400 615C500 610 550 630 700 640M370 655C460 670 540 640 690 665M350 690C440 660 500 700 620 685M240 700C310 740 430 690 600 710M220 720C300 770 420 720 575 740M190 720C300 780 420 740 550 762M130 740C250 760 400 790 540 790M80 780C200 750 300 800 520 820M85 820C140 790 240 850 350 850M90 860C150 830 210 870 300 880M90 890 300 895M90 915 300 920M100 945C160 930 230 960 300 950M100 980 280 985M100 1010C150 990 200 1020 260 1015M110 1040 255 1050M130 1070 245 1080M130 1095 240 1105M135 1125 225 1130M130 1155 210 1160"/>
              <path stroke="#4c362b" stroke-width="9" d="M518 325V440L575 600 465 665M645 335 655 440 710 560 680 660M590 255 530 300M333 825H510M125 777 190 745M279 830 300 940 225 1090 190 1200M100 1215 75 1270 110 1325 150 1300 155 1220M150 1040V1200M690 285 800 295"/>
              <path stroke="#5e4032" stroke-dasharray="8 10" d="M510 130 710 245M550 70 620 135M610 90 840 260M470 330 590 255 650 235 760 225M518 330V440L575 600M340 600 715 600M400 640 700 520M390 690 620 600M240 820 520 800M160 930 190 1010 150 1100M280 830 300 980 220 1110 180 1210"/>
            </g>
            <g fill="none" stroke="#1c1d1d" stroke-width="9" opacity=".6"><path d="M540 80 760 240M500 145 650 250M430 220 580 330M420 270 640 300M350 530H520M350 565 550 575M430 460 520 450M550 480 680 490M560 520 700 530M400 640 620 660M300 710 480 680M130 755 280 780M90 830 260 860M100 900H280M100 965 170 970M160 1050H240M160 1080 220 1085"/></g>
            <g fill="none" stroke="#9b6953" stroke-width="5" stroke-dasharray="2 4"><path d="M465 665 578 603M555 75 590 108M510 133 605 195M648 110 785 220M125 777 180 748M225 756 290 780M333 825 500 822M165 940 180 985M600 668 640 650M535 305 590 265M690 225 740 215"/></g>
            <g fill="none" stroke="#9b6953" stroke-width="9" stroke-dasharray="5 14"><path d="M338 270 330 330 390 350 400 320M480 305V330L520 315M645 330 690 285M848 255 820 300M295 420H340M155 1035 147 1085 155 1120 156 1165 140 1200 148 1245 157 1290 120 1320 90 1310 75 1270M290 925 280 970 250 1000 230 1050 235 1100 207 1150"/></g>
          </g>
          <path fill="none" stroke="#2c2724" stroke-width="24" stroke-linecap="round" stroke-linejoin="round" d="M342 268 375 270M338 320 375 350M828 255 845 240M750 308 815 292M285 485 330 472"/>
          <path fill="none" stroke="#a87058" stroke-width="20" stroke-linecap="round" d="M555 75h.1M498 156h.1M711 144h.1M702 198h.1M597 240h.1M813 213h.1M843 228h.1M825 258h.1M813 291h.1M753 309h.1M750 273h.1M714 285h.1M690 285h.1M684 318h.1M669 339h.1M633 360h.1M579 339h.1M528 300h.1M438 318h.1M387 294h.1M363 321h.1M342 268h.1M350 278h.1M379 350h.1M654 393h.1M636 420h.1M654 447h.1M675 483h.1M693 519h.1M702 546h.1M705 579h.1M690 609h.1M687 639h.1M684 663h.1M603 669h.1M531 480h.1M558 546h.1M465 666h.1M366 471h.1M402 462h.1M291 486h.1M273 486h.1M387 702h.1M366 738h.1M336 756h.1M309 774h.1M225 756h.1M123 777h.1M72 801h.1M231 801h.1M333 825h.1M447 825h.1M516 789h.1M513 819h.1M561 726h.1M579 705h.1M279 849h.1M282 885h.1M330 876h.1M357 879h.1M279 927h.1M276 963h.1M204 918h.1M189 981h.1M174 1017h.1M253 1023h.1M219 1083h.1M207 1140h.1M189 1176h.1M186 1200h.1M159 1215h.1M138 1200h.1M99 1221h.1M90 1237h.1M78 1275h.1M153 1270h.1M135 1299h.1M145 830h.1M430 682h.1"/>
        </g>
      </svg>
      <div class="dragitem"><svg class="ic" viewBox="0 0 17 14"><use href="#polygon"/></svg>Boundary2004_550_stpl83.shp</div>
      <svg class="cursor" viewBox="0 0 21 30"><path d="M1 1v16l4-4 3 7 3-1-3-7h5z" fill="#fff" stroke="#000"/><path d="M11.500 21.500h8v8h-8z" fill="#fff" stroke="#000"/><path d="M15.500 23v5m-2.500-2.500h5" stroke="#000"/></svg>
    </section>
  </div>

  <footer class="statusbar">
    <div class="locator"><svg viewBox="0 0 14 14"><circle cx="6" cy="5.500" r="4.500" fill="none" stroke="#888"/><path d="m9 9 4 4" stroke="#888" stroke-width="1.500"/></svg><input type="text" placeholder="Type to locate (Ctrl+K)" aria-label="Type to locate"></div>
    <label class="cut coordlabel" for="coord">Coordinate</label>
    <input class="field coord" id="coord" type="text" value="2346269,6943758">
    <button class="sicon mouse" aria-label="Toggle extents"><svg viewBox="0 0 16 16"><path d="M3 1.500 8 5l4 2 1.500 4-2 4-4-.5-3-4L1 5z" fill="#ddd" stroke="#333"/><path d="m2 3 8 9M5 2l7 7M1.500 7 6 3m-1 8 5-5m-2 8 5-5M10 5l4-4m-2 3 3-1" stroke="#222" stroke-width="1.200"/></svg></button>
    <label class="cut scalelabel" for="scale">Scale</label>
    <div class="combo"><select id="scale"><option>1:55012</option></select><span class="tri"></span></div>
    <button class="sicon lock" aria-label="Lock scale"><svg viewBox="0 0 16 16"><path d="M4.500 8V5c0-5 7-5 7 0v3" fill="none" stroke="#888" stroke-width="2"/><rect x="2" y="7" width="12" height="8.500" rx="1" fill="#555"/></svg></button>
    <label class="cut maglabel" for="mag">Magnifier</label>
    <div class="spin magspin"><input id="mag" type="text" value="100%"><div class="steps"><button aria-label="Increase magnifier"></button><button aria-label="Decrease magnifier"></button></div></div>
    <label class="cut rotlabel" for="rot">Rotation</label>
    <div class="spin rotspin"><input id="rot" type="text" value="0.0 °"><div class="steps"><button aria-label="Increase rotation"></button><button aria-label="Decrease rotation"></button></div></div>
    <label class="render"><input type="checkbox" class="check" checked>Render</label>
    <button class="crs"><svg viewBox="0 0 16 16"><path d="M1 7c1-6 13-6 14 0-1 3-4 7-7 8-3-1-6-5-7-8z" fill="#777" stroke="#777"/><path d="M1 7h14M3 10.500h10M8 1v14M4.500 3C3 8 5 12 8 15c3-3 5-7 3.500-12M3 4h10" fill="none" stroke="#ddd" stroke-width=".7"/></svg>EPSG:2276</button>
    <button class="sicon msg" aria-label="Messages"><svg viewBox="0 0 16 16"><path d="M8 1c10 0 10 11 3.500 11.500L14.500 15.500 8.500 13C-2.500 13-2 1 8 1z" fill="#555"/><path d="M4 7h.1M8 7h.1M12 7h.1" stroke="#fff" stroke-width="2" stroke-linecap="round"/></svg></button>
    <i class="grip"></i>
  </footer>
</main>
</body>
</html>
```

FILE: styles.css
```css
* { box-sizing: border-box; }
body {
  margin: 0;
  padding: 16px 17px 17px 16px;
  min-height: 100vh;
  background: #fff;
  color: #000;
  font: 11px/18px "Open Sans", "Noto Sans", sans-serif;
}
button, input, select {
  margin: 0;
  padding: 0;
  border: 0;
  background: none;
  color: inherit;
  font: inherit;
}
svg { display: block; }
i { display: block; }
.sprite { position: absolute; width: 0; height: 0; }

.window {
  display: flex;
  flex-direction: column;
  height: calc(100vh - 33px);
  border: 1px solid #1068b0;
  background: #f0f0f0;
  box-shadow: 4px 5px 9px rgba(0, 0, 0, .85), 0 0 8px rgba(0, 0, 0, .45);
}

.titlebar {
  display: flex;
  align-items: center;
  flex: none;
  height: 30px;
  padding-left: 8px;
  background: #0063b1;
  color: #fff;
}
.logo { width: 16px; height: 16px; margin-right: 5px; }
.title { flex: 1; margin: 0; font-size: 11px; font-weight: 400; white-space: nowrap; }
.winbtn { display: grid; place-items: center; width: 45px; height: 30px; }
.winbtn svg { width: 11px; height: 11px; }

.menubar { display: flex; flex: none; gap: 1px; height: 20px; padding-left: 3px; border-bottom: 1px solid #d4d4d4; }
.menubar button { padding: 0 7px; white-space: nowrap; }

.toolbar {
  display: flex;
  align-items: center;
  flex: none;
  height: 39px;
  border-bottom: 1px solid #b4b4b4;
  background: linear-gradient(#fafafa, #eee);
}
.tool { display: grid; place-items: center; flex: none; width: 33px; height: 31px; }
.tool svg { width: 24px; height: 24px; }
.tool.active { border: 1px solid #b0b0b0; border-radius: 3px; background: #dcdcdc; }
.tool.faded svg { opacity: .32; }
.handle { flex: none; width: 15px; height: 17px; }
.handle::before {
  content: "";
  display: block;
  width: 5px;
  height: 17px;
  margin: 0 auto;
  background: radial-gradient(circle, #b0b0b0 34%, transparent 42%) 0 0 / 3px 3px;
}
.handle.first { width: 12px; }
.handle.wide { width: 17px; }
.handle.last { margin-left: auto; margin-right: 2px; }
.sep { flex: none; width: 3px; height: 19px; border-left: 1px solid #c4c4c4; margin-left: 4px; }
.drop { display: grid; place-items: center; flex: none; width: 12px; height: 24px; }
.drop::before { content: ""; border: 4px solid transparent; border-top-color: #555; border-bottom: 0; }
.more { margin-left: auto; padding-right: 5px; font-size: 15px; font-weight: 700; }

.abc { font: 700 8px "DejaVu Sans", sans-serif; }
.glyph-a { font: 13px "Noto Sans", sans-serif; }
.ratio { font: 700 9px "DejaVu Sans Condensed", "DejaVu Sans", sans-serif; }
.info { font: italic 700 14px "Liberation Serif", serif; }
.info.small { font-size: 11px; }
.question { font: 16px "Liberation Serif", serif; }

.workspace { display: flex; flex: 1; min-height: 0; }
.docks { display: flex; flex-direction: column; flex: none; width: 282px; }
.dock { display: flex; flex-direction: column; min-height: 0; }
.browser { flex: 239 1 0; }
.layers { flex: 215 1 0; }
.dockhead { display: flex; align-items: center; gap: 3px; flex: none; height: 20px; padding: 0 2px 0 4px; }
.dockhead h2 { flex: 1; margin: 0; font-size: 11px; font-weight: 400; }
.dockhead svg { width: 11px; height: 11px; }
.dockbar { display: flex; align-items: center; gap: 7px; flex: none; height: 30px; padding: 0 0 2px 7px; }
.dockbar svg { width: 18px; height: 18px; }
.dockbar button:has(svg[viewBox="0 0 24 24"]) svg { padding: 1px; }
.dockbar .drop { width: 12px; margin: 0 -1px 0 -5px; }

.treebox {
  display: grid;
  grid-template: minmax(0, 1fr) 14px / minmax(0, 1fr) 14px;
  flex: 1;
  min-height: 0;
  border: 1px solid #aaa;
  background: #fff;
}
.tree { margin: 0; padding: 1px 0 0; overflow: hidden; list-style: none; }
.tree li { display: flex; align-items: center; height: 18px; padding-left: 6px; white-space: nowrap; }
.tree li.child { padding-left: 43px; }
.tree li.selected { background: #0078d7; color: #fff; }
.ic { flex: none; width: 16px; height: 16px; margin-right: 6px; }
.twist { flex: none; width: 17px; height: 8px; }
.twist::before { content: ""; display: block; width: 0; border: 4px solid transparent; border-left-color: #555; border-right: 0; margin-left: 2px; }
.twist.open::before { border: 4px solid transparent; border-top-color: #555; border-bottom: 0; margin: 2px 0 0; }
.twist.none::before { content: none; }

.vscroll, .hscroll { display: flex; background: #e4e4e4; }
.vscroll { flex-direction: column; border-left: 1px solid #bbb; }
.hscroll { border-top: 1px solid #bbb; }
.groove { display: flex; flex: 1; }
.vscroll .groove { flex-direction: column; }
.thumb { background: #fafafa; border: 1px solid #c4c4c4; }
.vscroll .thumb { height: 28px; margin-top: 60px; border-width: 1px 0; }
.hscroll .thumb { flex: 1; margin-left: 66px; border-width: 0 1px; }
.arrow { display: grid; place-items: center; flex: none; width: 13px; height: 13px; background: #f6f6f6; }
.arrow::before { content: ""; border: 4px solid transparent; }
.up::before { border-top: 0; border-bottom-color: #555; }
.down::before { border-bottom: 0; border-top-color: #555; }
.left::before { border-left: 0; border-right-color: #555; }
.right::before { border-right: 0; border-left-color: #555; }
.corner { background: #f0f0f0; border: 1px solid #bbb; border-width: 1px 0 0 1px; }

.hsplit { flex: none; height: 6px; }
.hsplit::before { content: ""; display: block; width: 17px; height: 3px; margin: 1px auto 0; background: radial-gradient(circle, #aaa 34%, transparent 42%) 0 0 / 3px 3px; }
.vsplit { flex: none; width: 6px; }

.layerlist { flex: 1; border: 1px solid #aaa; background: #fff; }
.layer { display: flex; align-items: center; height: 18px; padding-left: 24px; background: #f0f0f0; }
.layername { font-weight: 700; text-decoration: underline; white-space: nowrap; }
.dot { width: 8px; height: 8px; margin: 0 10px 0 10px; border: 1px solid #50545c; border-radius: 50%; background: #6c7380; }
.check { appearance: none; display: grid; place-items: center; flex: none; width: 13px; height: 13px; border: 1px solid #999; background: #fff; }
.check:checked::before { content: ""; width: 9px; height: 9px; background: #000; clip-path: polygon(0 45%, 20% 40%, 38% 68%, 80% 0, 100% 0, 45% 100%, 30% 100%); }

.canvas { position: relative; flex: 1; min-width: 0; border: 1px solid #aaa; border-right: 0; background: #fff; }
.map { width: 100%; height: 100%; }
.dragitem {
  position: absolute;
  left: 216px;
  top: 122px;
  display: flex;
  align-items: center;
  width: 226px;
  height: 18px;
  padding-left: 3px;
  background: #0078d7;
  color: #fff;
  white-space: nowrap;
}
.cursor { position: absolute; left: 415px; top: 135px; width: 21px; height: 30px; }

.statusbar {
  display: flex;
  align-items: center;
  flex: none;
  height: 28px;
  padding: 1px 0 0 4px;
  font: 11px/20px "DejaVu Sans Condensed", "DejaVu Sans", sans-serif;
}
.locator, .field, .combo, .spin { flex: none; height: 22px; border: 1px solid #adadad; border-radius: 3px; background: #fff; }
.locator { display: flex; align-items: center; gap: 5px; width: 200px; margin-right: auto; padding-left: 8px; }
.locator svg { width: 14px; height: 14px; }
.locator input { flex: 1; min-width: 0; }
.locator input::placeholder { color: #808080; }
.cut { display: flex; justify-content: center; flex: none; overflow: hidden; white-space: nowrap; }
.coordlabel { width: 47px; margin-right: 3px; }
.coord { width: 103px; padding: 0 2px 0 5px; }
.sicon svg { width: 16px; height: 16px; }
.mouse { margin: 0 12px 0 5px; }
.scalelabel { width: 19px; margin-right: 3px; }
.combo { display: flex; align-items: center; width: 81px; }
.combo select { flex: 1; min-width: 0; height: 20px; padding-left: 4px; appearance: none; }
.tri { display: grid; place-items: center; width: 20px; height: 20px; border-left: 1px solid #bbb; }
.tri::before { content: ""; border: 4px solid transparent; border-top-color: #555; border-bottom: 0; }
.lock { margin: 0 7px 0 10px; }
.maglabel { width: 39px; margin-right: 2px; }
.magspin { width: 88px; }
.rotlabel { width: 35px; margin: 0 9px; }
.rotspin { width: 84px; }
.spin { display: flex; }
.spin input { flex: 1; min-width: 0; padding-left: 4px; }
.steps { display: grid; width: 14px; border-left: 1px solid #bbb; }
.steps button { display: grid; place-items: center; }
.steps button::before { content: ""; border: 4px solid transparent; border-top: 0; border-bottom-color: #555; }
.steps button + button::before { border: 4px solid transparent; border-bottom: 0; border-top-color: #555; }
.render { display: flex; align-items: center; gap: 4px; margin: 0 17px 0 7px; }
.crs { display: flex; align-items: center; gap: 3px; margin-right: 18px; }
.crs svg { width: 16px; height: 16px; }
.grip { align-self: flex-end; width: 12px; height: 12px; margin: 0 1px 1px 18px; background: radial-gradient(circle, #aaa 34%, transparent 42%) 0 0 / 3px 3px; clip-path: polygon(100% 0, 100% 100%, 0 100%); }
```
